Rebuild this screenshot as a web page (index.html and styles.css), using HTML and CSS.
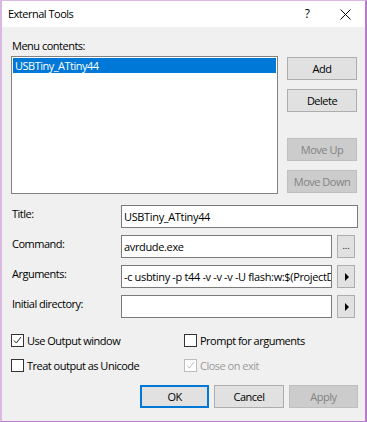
FILE: index.html
```html
<!DOCTYPE html>
<html>
<head>
<meta charset="utf-8">
<link rel="stylesheet" href="styles.css">
</head>
<body>
<div class="window">
  <div class="titlebar">
    <span class="title">External Tools</span>
    <span class="help">?</span>
    <span class="close"><svg width="11" height="11" viewBox="0 0 11 11"><path d="M0.5 0.5 L10.5 10.5 M10.5 0.5 L0.5 10.5" stroke="#000" stroke-width="1" fill="none"/></svg></span>
  </div>
  <div class="content">
    <div class="menu-label">Menu contents:</div>
    <div class="list-area">
      <div class="listbox">
        <div class="item selected">USBTiny_ATtiny44</div>
      </div>
      <div class="side-buttons">
        <button class="btn">Add</button>
        <button class="btn">Delete</button>
        <button class="btn disabled gap-top">Move Up</button>
        <button class="btn disabled">Move Down</button>
      </div>
    </div>
    <div class="form">
      <div class="row">
        <div class="label">Title:</div>
        <div class="textbox wide">USBTiny_ATtiny44</div>
      </div>
      <div class="row">
        <div class="label">Command:</div>
        <div class="textbox">avrdude.exe</div>
        <button class="mini dots">...</button>
      </div>
      <div class="row">
        <div class="label">Arguments:</div>
        <div class="textbox">-c usbtiny -p t44 -v -v -v -U flash:w:$(ProjectDir)Debug\$(TargetName).hex:i</div>
        <button class="mini"><span class="arrow"></span></button>
      </div>
      <div class="row">
        <div class="label">Initial directory:</div>
        <div class="textbox"></div>
        <button class="mini"><span class="arrow"></span></button>
      </div>
    </div>
    <div class="checks">
      <label class="check"><span class="box"><svg width="11" height="11" viewBox="0 0 11 11"><path d="M2 5.5 L4.3 8 L9 2" stroke="#222" stroke-width="1" fill="none"/></svg></span>Use Output window</label>
      <label class="check"><span class="box"></span>Prompt for arguments</label>
      <label class="check"><span class="box"></span>Treat output as Unicode</label>
      <label class="check off"><span class="box"><svg width="11" height="11" viewBox="0 0 11 11"><path d="M2 5.5 L4.3 8 L9 2" stroke="#bcbcbc" stroke-width="1" fill="none"/></svg></span>Close on exit</label>
    </div>
    <div class="footer">
      <button class="btn default">OK</button>
      <button class="btn">Cancel</button>
      <button class="btn disabled">Apply</button>
    </div>
  </div>
</div>
</body>
</html>
```

FILE: styles.css
```css
* { box-sizing: border-box; }
html, body { margin: 0; padding: 0; }
body {
  font-family: "Open Sans", "Noto Sans", sans-serif;
  font-size: 11px;
  letter-spacing: -0.5px;
  color: #000;
  background: #f0f0f0;
}
.window {
  width: 367px;
  height: 422px;
  border-top: 1px solid #d9b8e2;
  border-left: 2px solid #d9b8e2;
  border-right: 2px solid #b77bcb;
  border-bottom: 1px solid #b77bcb;
  background: #f0f0f0;
  display: flex;
  flex-direction: column;
}
.titlebar {
  height: 26px;
  background: #fff;
  display: flex;
  align-items: center;
  padding-left: 6px;
}
.title { flex: 1; font-size: 11px; line-height: 16px; }
.help { width: 10px; margin-right: 28px; font-size: 12px; line-height: 16px; text-align: center; }
.close { width: 11px; height: 11px; margin-right: 14px; display: flex; }
.close svg { display: block; }
.content {
  padding: 11px 7px 0 9px;
  display: flex;
  flex-direction: column;
}
.menu-label { line-height: 16px; padding-left: 1px; }
.list-area {
  display: flex;
  margin-top: 2px;
}
.listbox {
  width: 267px;
  height: 138px;
  background: #fff;
  border: 1px solid #828282;
  padding: 1px;
}
.item { height: 15px; line-height: 15px; padding-left: 2px; }
.item.selected { background: #0078d7; color: #fff; }
.side-buttons {
  margin-left: 9px;
  margin-top: 1px;
  display: flex;
  flex-direction: column;
  gap: 9px;
}
.side-buttons .gap-top { margin-top: 17px; }
.btn {
  width: 70px;
  height: 23px;
  background: #e1e1e1;
  border: 1px solid #adadad;
  font: inherit;
  letter-spacing: inherit;
  color: #000;
  padding: 0;
  line-height: 20px;
}
.btn.disabled { background: #cccccc; border-color: #bfbfbf; color: #838383; }
.btn.default { border-color: #0078d7; box-shadow: inset 0 0 0 1px #0078d7; }
.form {
  margin-top: 11px;
  display: flex;
  flex-direction: column;
  gap: 7px;
}
.row { display: flex; align-items: flex-start; }
.label { width: 110px; line-height: 16px; margin-top: 1px; padding-left: 1px; }
.textbox {
  width: 211px;
  height: 23px;
  background: #fff;
  border: 1px solid #7a7a7a;
  line-height: 21px;
  padding-left: 2px;
  white-space: nowrap;
  overflow: hidden;
  letter-spacing: -0.35px;
}
.textbox.wide { width: 237px; }
.mini {
  width: 18px;
  height: 23px;
  margin-left: 5px;
  background: #e1e1e1;
  border: 1px solid #adadad;
  padding: 0;
  font: inherit;
  display: flex;
  align-items: center;
  justify-content: center;
}
.mini.dots { font-size: 9px; line-height: 12px; align-items: flex-end; padding-bottom: 5px; letter-spacing: 0; }
.arrow {
  width: 0; height: 0;
  border-top: 4px solid transparent;
  border-bottom: 4px solid transparent;
  border-left: 4px solid #000;
  margin-left: 1px;
}
.checks {
  margin-top: 16px;
  display: grid;
  grid-template-columns: 173px 1fr;
  row-gap: 12px;
}
.check { display: flex; align-items: center; height: 13px; line-height: 16px; }
.box {
  width: 13px; height: 13px;
  border: 1px solid #333;
  background: #fff;
  margin-right: 3px;
  display: flex;
  align-items: center;
  justify-content: center;
  flex: none;
}
.check.off { color: #9a9a9a; }
.check.off .box { border-color: #bcbcbc; }
.footer {
  margin-top: 13px;
  display: flex;
  gap: 5px;
  padding-left: 129px;
}
```
